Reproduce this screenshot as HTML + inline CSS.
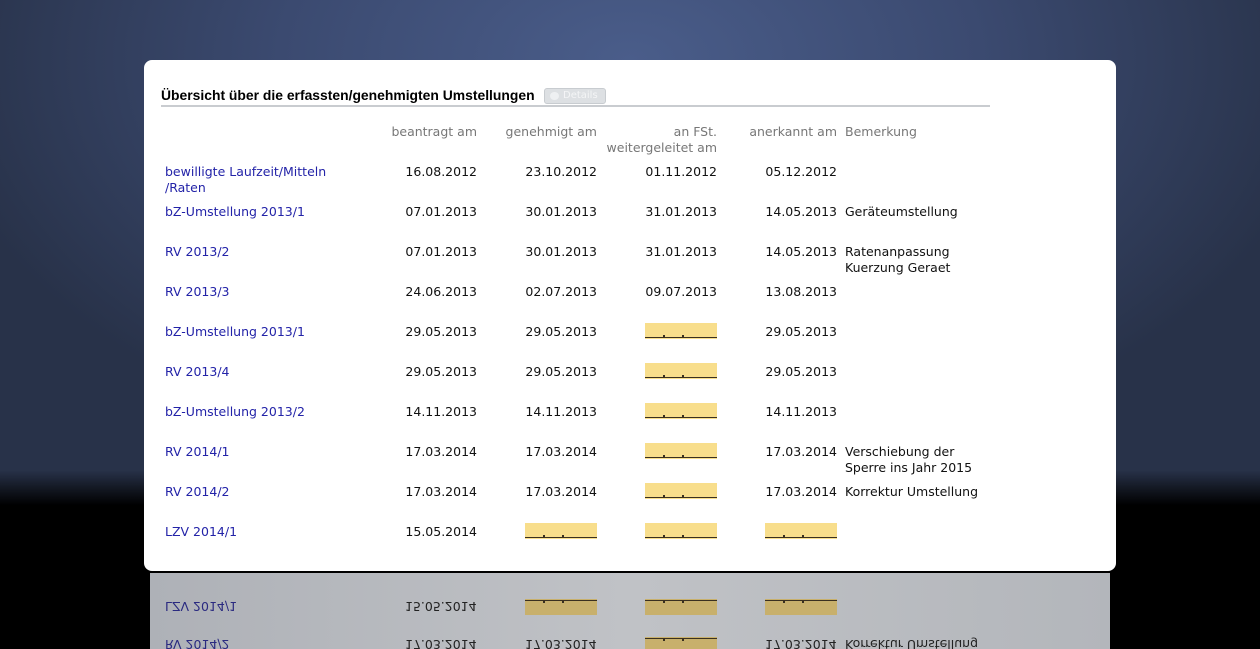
<!DOCTYPE html>
<html><head><meta charset="utf-8"><style>
*{margin:0;padding:0;box-sizing:border-box}
body{width:1260px;height:649px;overflow:hidden;position:relative;font-family:"DejaVu Sans","Liberation Sans",sans-serif;font-size:12.5px;
background:linear-gradient(to bottom,rgba(0,0,0,0) 0,rgba(0,0,0,0) 470px,#000 505px,#000 649px),radial-gradient(ellipse 700px 420px at 630px 60px,#4a5d8a 0%,#3b4a70 50%,#283249 100%);}
.panel{position:absolute;left:144px;top:60px;width:972px;height:511px;background:#fff;border-radius:8px;}
.refl{position:absolute;left:150px;top:573px;width:960px;height:76px;background:linear-gradient(to right,#aeb1b7,#c0c2c6 50%,#b3b6bb);overflow:hidden}
.t{position:absolute;white-space:nowrap;line-height:16px;color:#111}
.r{text-align:right}
.l{color:#2323a8}
.h{color:#777}
.y{position:absolute;width:72px;height:16px;background:#f8de8c}
.y:after{content:"";position:absolute;left:0;right:0;bottom:1px;height:1px;background:#3a3020}
.y i{position:absolute;bottom:2px;width:2px;height:2px;background:#3a3020}
.ttl{position:absolute;left:161px;top:87px;font-family:"Liberation Sans",sans-serif;font-weight:bold;font-size:13.9px;color:#000;line-height:16px}
.btn{position:absolute;left:544px;top:88px;width:62px;height:16px;background:#dde0e3;border:1px solid #c8ccd0;border-radius:3px;font-size:10px;color:#f4f5f6;line-height:14px;padding-left:18px}
.btn:before{content:"";position:absolute;left:5px;top:3px;width:9px;height:8px;border-radius:50%;background:#eef0f2}
.line{position:absolute;left:161px;top:105px;width:829px;height:2px;background:#c9ccd0}
.refl .t{transform:scaleY(-1);color:#222}
.refl .l{color:#2a2a80}
.refl .y{background:#c8b06c}
.refl .y:after{top:1px;bottom:auto}
.refl .y i{top:2px;bottom:auto}
</style></head><body>
<div class="panel"></div>
<div class="ttl">Übersicht über die erfassten/genehmigten Umstellungen</div>
<div class="btn">Details</div>
<div class="line"></div>

<div class="t h r" style="right:783px;top:124px">beantragt am</div>
<div class="t h r" style="right:663px;top:124px">genehmigt am</div>
<div class="t h r" style="right:543px;top:124px">an FSt.<br>weitergeleitet am</div>
<div class="t h r" style="right:423px;top:124px">anerkannt am</div>
<div class="t h" style="left:845px;top:124px">Bemerkung</div>

<div class="t l" style="left:165px;top:164px">bewilligte Laufzeit/Mitteln<br>/Raten</div>
<div class="t r" style="right:783px;top:164px">16.08.2012</div>
<div class="t r" style="right:663px;top:164px">23.10.2012</div>
<div class="t r" style="right:543px;top:164px">01.11.2012</div>
<div class="t r" style="right:423px;top:164px">05.12.2012</div>

<div class="t l" style="left:165px;top:204px">bZ-Umstellung 2013/1</div>
<div class="t r" style="right:783px;top:204px">07.01.2013</div>
<div class="t r" style="right:663px;top:204px">30.01.2013</div>
<div class="t r" style="right:543px;top:204px">31.01.2013</div>
<div class="t r" style="right:423px;top:204px">14.05.2013</div>
<div class="t" style="left:845px;top:204px">Geräteumstellung</div>

<div class="t l" style="left:165px;top:244px">RV 2013/2</div>
<div class="t r" style="right:783px;top:244px">07.01.2013</div>
<div class="t r" style="right:663px;top:244px">30.01.2013</div>
<div class="t r" style="right:543px;top:244px">31.01.2013</div>
<div class="t r" style="right:423px;top:244px">14.05.2013</div>
<div class="t" style="left:845px;top:244px">Ratenanpassung<br>Kuerzung Geraet</div>

<div class="t l" style="left:165px;top:284px">RV 2013/3</div>
<div class="t r" style="right:783px;top:284px">24.06.2013</div>
<div class="t r" style="right:663px;top:284px">02.07.2013</div>
<div class="t r" style="right:543px;top:284px">09.07.2013</div>
<div class="t r" style="right:423px;top:284px">13.08.2013</div>

<div class="t l" style="left:165px;top:324px">bZ-Umstellung 2013/1</div>
<div class="t r" style="right:783px;top:324px">29.05.2013</div>
<div class="t r" style="right:663px;top:324px">29.05.2013</div>
<div class="y" style="left:645px;top:323px"><i style="left:18px"></i><i style="left:37px"></i></div>
<div class="t r" style="right:423px;top:324px">29.05.2013</div>

<div class="t l" style="left:165px;top:364px">RV 2013/4</div>
<div class="t r" style="right:783px;top:364px">29.05.2013</div>
<div class="t r" style="right:663px;top:364px">29.05.2013</div>
<div class="y" style="left:645px;top:363px"><i style="left:18px"></i><i style="left:37px"></i></div>
<div class="t r" style="right:423px;top:364px">29.05.2013</div>

<div class="t l" style="left:165px;top:404px">bZ-Umstellung 2013/2</div>
<div class="t r" style="right:783px;top:404px">14.11.2013</div>
<div class="t r" style="right:663px;top:404px">14.11.2013</div>
<div class="y" style="left:645px;top:403px"><i style="left:18px"></i><i style="left:37px"></i></div>
<div class="t r" style="right:423px;top:404px">14.11.2013</div>

<div class="t l" style="left:165px;top:444px">RV 2014/1</div>
<div class="t r" style="right:783px;top:444px">17.03.2014</div>
<div class="t r" style="right:663px;top:444px">17.03.2014</div>
<div class="y" style="left:645px;top:443px"><i style="left:18px"></i><i style="left:37px"></i></div>
<div class="t r" style="right:423px;top:444px">17.03.2014</div>
<div class="t" style="left:845px;top:444px">Verschiebung der<br>Sperre ins Jahr 2015</div>

<div class="t l" style="left:165px;top:484px">RV 2014/2</div>
<div class="t r" style="right:783px;top:484px">17.03.2014</div>
<div class="t r" style="right:663px;top:484px">17.03.2014</div>
<div class="y" style="left:645px;top:483px"><i style="left:18px"></i><i style="left:37px"></i></div>
<div class="t r" style="right:423px;top:484px">17.03.2014</div>
<div class="t" style="left:845px;top:484px">Korrektur Umstellung</div>

<div class="t l" style="left:165px;top:524px">LZV 2014/1</div>
<div class="t r" style="right:783px;top:524px">15.05.2014</div>
<div class="y" style="left:525px;top:523px"><i style="left:18px"></i><i style="left:37px"></i></div>
<div class="y" style="left:645px;top:523px"><i style="left:18px"></i><i style="left:37px"></i></div>
<div class="y" style="left:765px;top:523px"><i style="left:18px"></i><i style="left:37px"></i></div>

<div class="refl">
<div class="t l" style="left:15px;top:25px">LZV 2014/1</div>
<div class="t" style="left:255px;top:25px">15.05.2014</div>
<div class="y" style="left:375px;top:26px"><i style="left:18px"></i><i style="left:37px"></i></div>
<div class="y" style="left:495px;top:26px"><i style="left:18px"></i><i style="left:37px"></i></div>
<div class="y" style="left:615px;top:26px"><i style="left:18px"></i><i style="left:37px"></i></div>
<div class="t l" style="left:15px;top:63px">RV 2014/2</div>
<div class="t" style="left:255px;top:63px">17.03.2014</div>
<div class="t" style="left:375px;top:63px">17.03.2014</div>
<div class="y" style="left:495px;top:64px"><i style="left:18px"></i><i style="left:37px"></i></div>
<div class="t" style="left:615px;top:63px">17.03.2014</div>
<div class="t" style="left:695px;top:63px">Korrektur Umstellung</div>
</div>
</body></html>
